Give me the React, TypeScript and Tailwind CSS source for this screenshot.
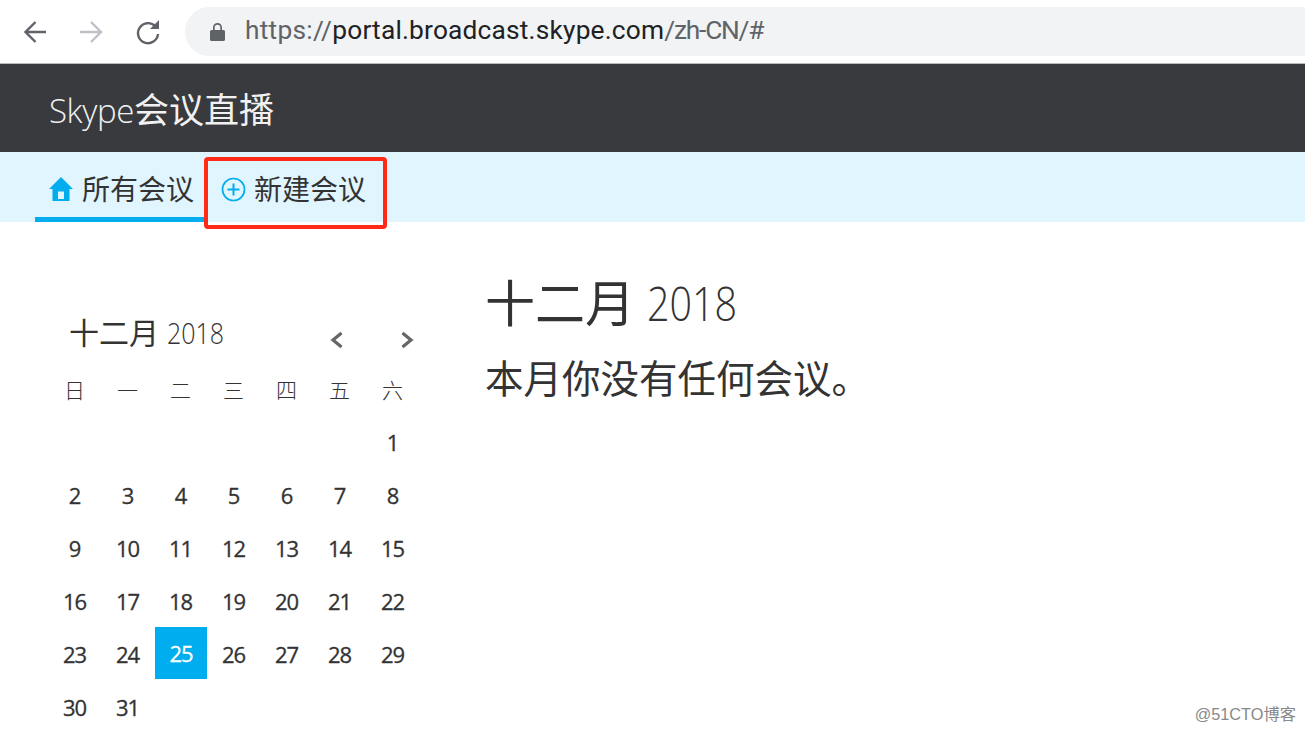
const cjk = "font-['Open_Sans','Noto_Sans_CJK_SC',sans-serif]";

const weeks = [
  ["", "", "", "", "", "", "1"],
  ["2", "3", "4", "5", "6", "7", "8"],
  ["9", "10", "11", "12", "13", "14", "15"],
  ["16", "17", "18", "19", "20", "21", "22"],
  ["23", "24", "25", "26", "27", "28", "29"],
  ["30", "31", "", "", "", "", ""],
];
const dayNames = ["日", "一", "二", "三", "四", "五", "六"];

const BrowserBar = () => (
  <div className="flex h-[64px] items-center border-b border-[#b9b9b9] bg-white pl-[23px]">
    <svg width="24" height="24" viewBox="0 0 24 24" fill="none" stroke="#5f6368" strokeWidth="2.4">
      <path d="M23 12H3M12.500 2 2.500 12l10 10" />
    </svg>
    <svg className="ml-[32px]" width="26" height="26" viewBox="0 0 26 26" fill="none" stroke="#bdc1c6" strokeWidth="2.4">
      <path d="M1 13h21M12 3l10 10-10 10" />
    </svg>
    <svg className="ml-[30px]" width="26" height="26" viewBox="0 0 26 26" fill="none">
      <path d="M20.500 7.500A10 10 0 1 0 23 15" stroke="#5f6368" strokeWidth="2.400" />
      <path d="M15 10h9V1z" fill="#5f6368" />
    </svg>
    <div className="ml-[24px] flex h-[49px] flex-1 items-center rounded-l-full bg-[#f1f3f4] pl-[25px]">
      <svg width="15" height="20" viewBox="0 0 15 20" fill="#5f6368">
        <path d="M3 8V5.500a4.500 4.500 0 0 1 9 0V8h1.500A1.500 1.500 0 0 1 15 9.500v8a1.500 1.500 0 0 1-1.500 1.500h-12A1.500 1.500 0 0 1 0 17.500v-8A1.500 1.500 0 0 1 1.500 8zm1.700 0h5.600V5.500a2.800 2.800 0 0 0-5.600 0z" />
      </svg>
      <span className="ml-[20px] -mt-[2px] font-['Roboto',sans-serif] text-[26.3px] text-[#5f6368]">
        <span className="tracking-[0.25px]">https://</span>
        <span className="tracking-[0.19px] text-[#202124]">portal.broadcast.skype.com</span>
        <span className="tracking-[-1.200px]">/zh-CN/#</span>
      </span>
    </div>
  </div>
);

const Nav = () => (
  <div className={`flex h-[70px] items-stretch bg-[#e1f5fe] pl-[35px] ${cjk}`}>
    <div className="flex w-[169px] items-center border-b-[5px] border-[#00adef] pl-[14px] pt-[9px]">
      <svg width="24" height="24" viewBox="0 0 24 24" fill="#00adef">
        <path d="M12 0 0 12h3.500v12h17V12H24zM9 14.500h6V22H9z" fillRule="evenodd" />
      </svg>
      <span className="ml-[9px] text-[28px] leading-none text-[#333]">所有会议</span>
    </div>
    <div className="relative flex w-[183px] items-center pl-[17px] pb-[5px] pt-[9px]">
      <svg width="25" height="25" viewBox="0 0 25 25" fill="none" stroke="#00adef" strokeWidth="1.700">
        <circle cx="12.500" cy="12.500" r="11" />
        <path strokeWidth="2" d="M12.500 6.500v12M6.500 12.500h12" />
      </svg>
      <span className="ml-[8px] text-[28px] leading-none text-[#333]">新建会议</span>
      <div className="absolute left-0 top-[5px] h-[72px] w-[183px] rounded-[4px] border-[4px] border-[#ff2a17]" />
    </div>
  </div>
);

const Calendar = () => (
  <div className="w-[371px]">
    <div className="flex h-[60px] items-start pl-[21px] pt-[9px]">
      <span className="text-[30px] leading-[44px] text-[#333]">十二月</span>
      <span className="ml-[8px] inline-block origin-left scale-x-[0.86] text-[29px] font-light leading-[44px] text-[#333]">2018</span>
      <div className="ml-[96px] mt-[20px] flex items-center gap-[58px]">
        <svg width="14" height="18" viewBox="0 0 14 18" fill="none" stroke="#666" strokeWidth="3.2">
          <path d="M12.500 2 4 9l8.500 7" />
        </svg>
        <svg width="14" height="18" viewBox="0 0 14 18" fill="none" stroke="#666" strokeWidth="3.2">
          <path d="M1.500 2 10 9l-8.500 7" />
        </svg>
      </div>
    </div>
    <div className="grid grid-cols-[repeat(7,53px)] grid-rows-[repeat(7,53px)]">
      {dayNames.map((d) => (
        <div key={d} className="flex h-[53px] items-center justify-center pt-[4px] text-[21px] font-light text-[#333]">
          {d}
        </div>
      ))}
      {weeks.flat().map((d, i) => (
        <div
          key={i}
          className={
            d === "25"
              ? "ml-[1px] flex h-[52px] items-center justify-center bg-[#00aeef] pt-[1px] text-[22px] font-medium tracking-[-1px] text-white [-webkit-text-stroke:0.3px_#fff]"
              : "flex items-center justify-center pt-[2px] text-[22px] font-medium tracking-[-1.100px] text-[#333] [-webkit-text-stroke:0.3px_#333]"
          }
        >
          {d}
        </div>
      ))}
    </div>
  </div>
);

export default function App() {
  return (
    <div className={`relative h-[735px] overflow-hidden bg-white ${cjk}`}>
      <BrowserBar />
      <div className="flex h-[88px] items-center bg-[#393a3e] pl-[49px] pt-[5px] text-[33px] font-light text-[#f1f1f1]">
        <span className="tracking-[-0.4px]">Skype</span>
        <span className="text-[35px] font-normal">会议直播</span>
      </div>
      <Nav />
      <div className="flex pl-[48px] pt-[80px]">
        <Calendar />
        <div className="ml-[66px] -mt-[32px]">
          <div className="flex h-[66px] items-center text-[#333]">
            <span className="text-[50px] leading-none">十二月</span>
            <span className="ml-[12px] inline-block origin-left scale-x-[0.84] text-[47px] font-light leading-none">2018</span>
          </div>
          <div className="mt-[14px] text-[38.500px] leading-[56px] text-[#333]">本月你没有任何会议。</div>
        </div>
      </div>
      <div className="absolute bottom-[9px] right-[9px] font-['Liberation_Sans','Noto_Sans_CJK_SC',sans-serif] text-[16.300px] text-[#888]">
        @51CTO博客
      </div>
    </div>
  );
}
